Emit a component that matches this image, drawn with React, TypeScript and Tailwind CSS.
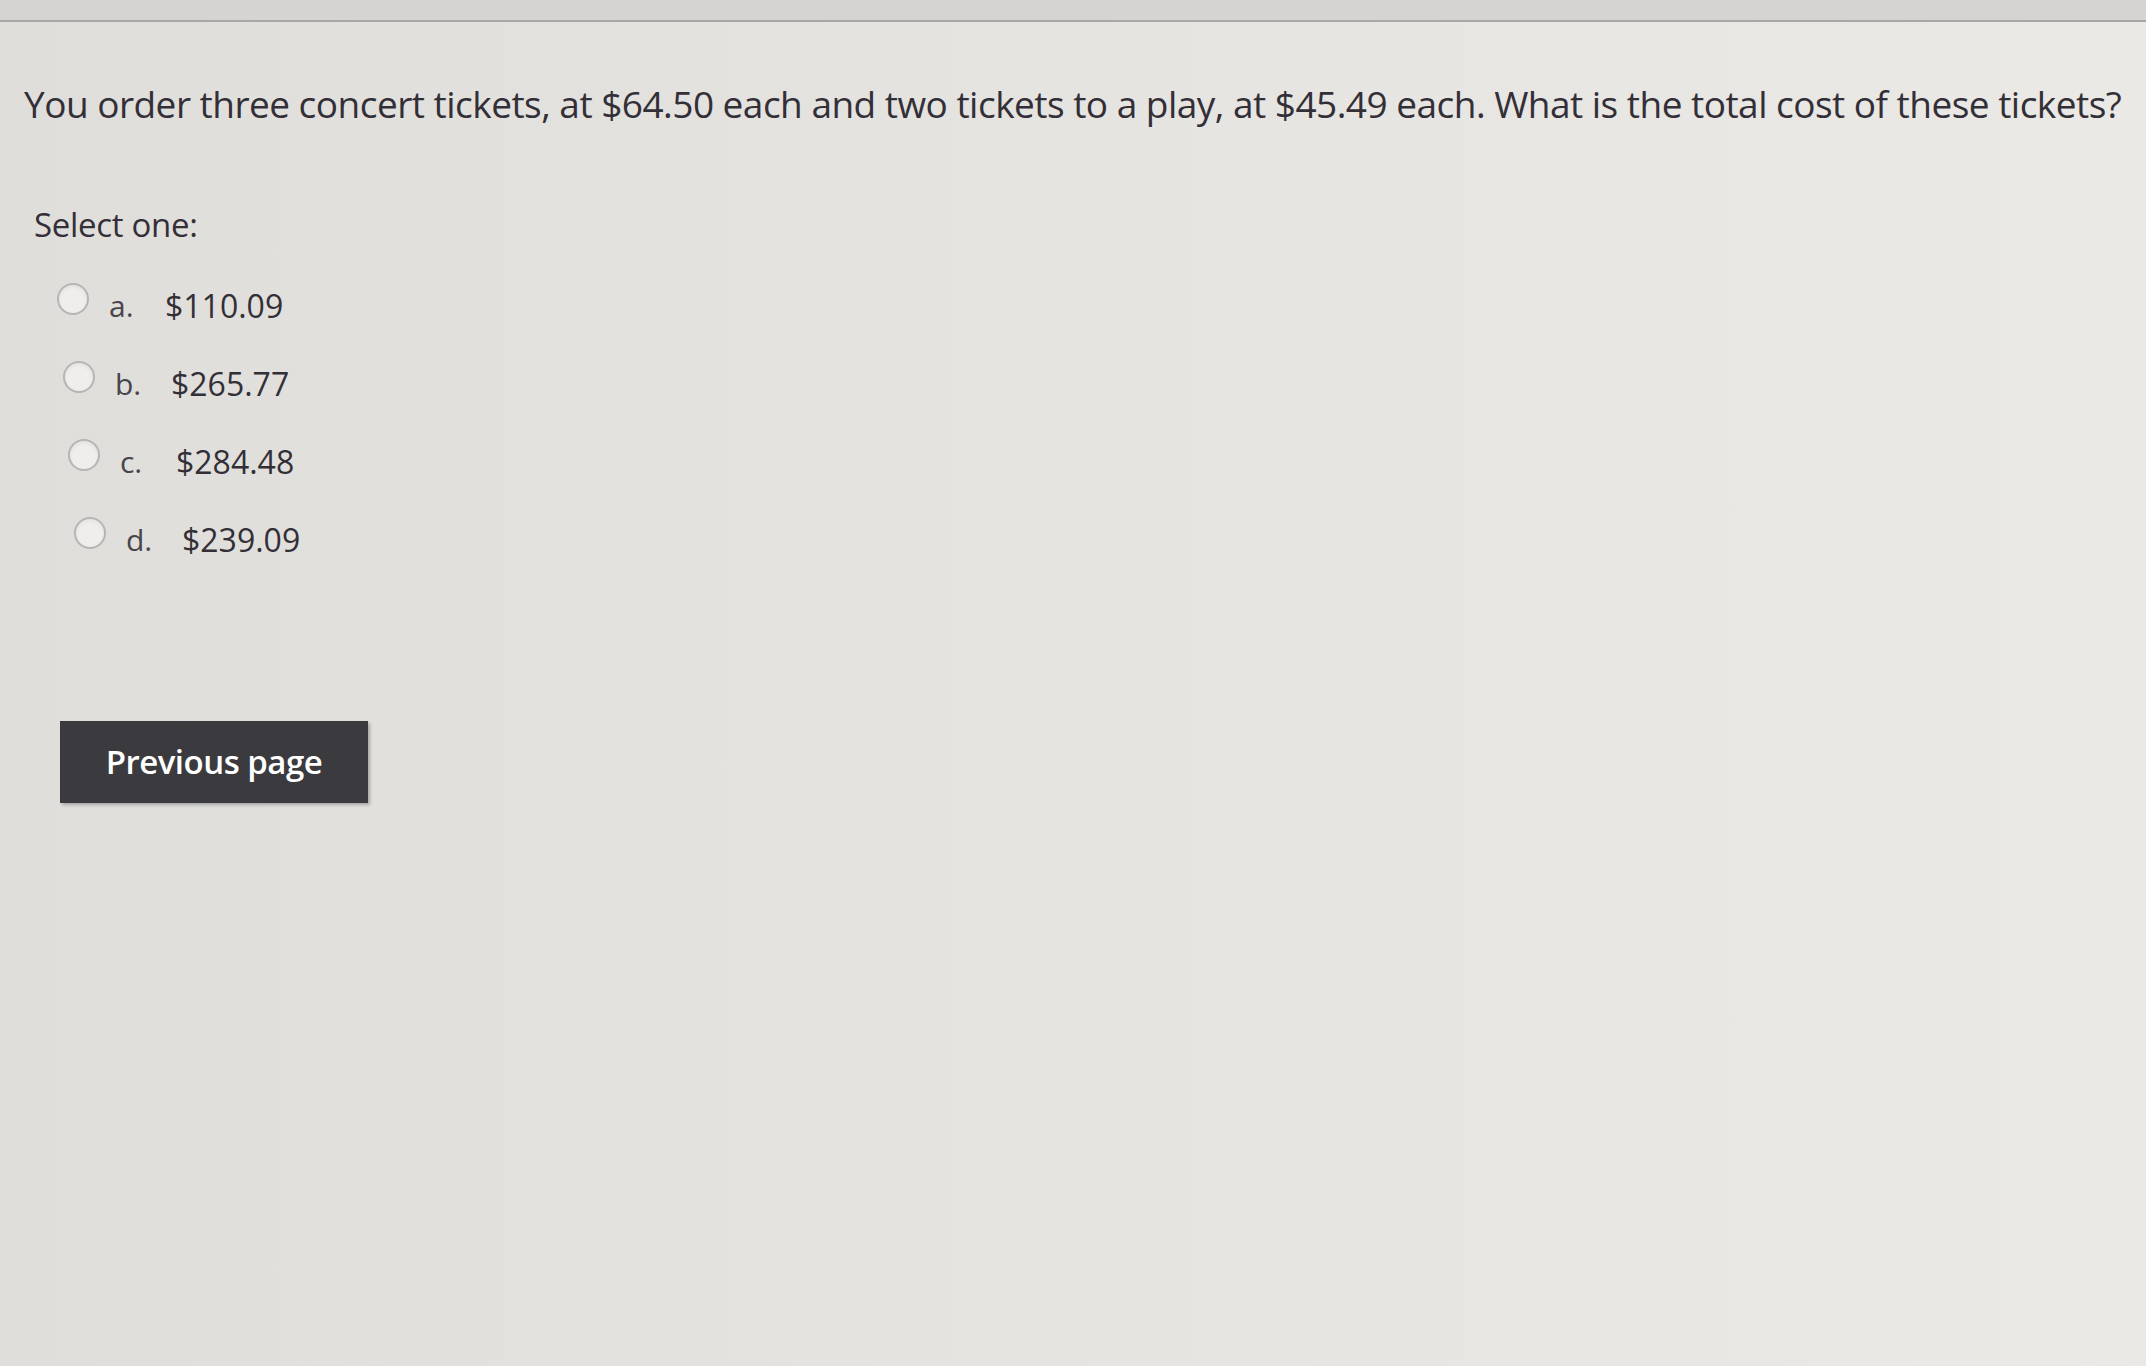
import React from 'react'

const options = [
  { letter: 'a.', value: '$110.09', indent: 'ml-[33px]' },
  { letter: 'b.', value: '$265.77', indent: 'ml-[39px]' },
  { letter: 'c.', value: '$284.48', indent: 'ml-[44px]' },
  { letter: 'd.', value: '$239.09', indent: 'ml-[50px]' },
]

export default function App() {
  return (
    <div
      className="min-h-[1366px] w-full bg-gradient-to-r from-[#e0dedb] via-[#e6e4e1] to-[#eae9e6] text-[#332f37]"
      style={{ fontFamily: '"Open Sans", "Noto Sans", sans-serif' }}
    >
      {/* top strip */}
      <div className="h-[22px] bg-[#d6d4d2] border-b-2 border-[#a9a7a6]" />

      <div className="pl-[24px] pt-[60px]">
        <p className="text-[37px] leading-[44px] tracking-[-0.52px] whitespace-nowrap">
          You order three concert tickets, at $64.50 each and two tickets to a play, at $45.49 each. What is the total cost of these tickets?
        </p>

        <p className="mt-[80px] ml-[10px] text-[33px] leading-[38px] tracking-[-0.3px]">Select one:</p>

        <div className="mt-[42px] flex flex-col gap-[38px]">
          {options.map((o) => (
            <label key={o.letter} className={`flex items-center h-[40px] ${o.indent}`}>
              <span className="w-[32px] h-[32px] rounded-full border-2 border-[#b7b5b4] bg-[#efeeec] shadow-inner mr-[20px] -mt-[14px]" />
              <span className="w-[56px] text-[30px] leading-[40px] text-[#48454b]">{o.letter}</span>
              <span className="text-[32px] leading-[40px]">{o.value}</span>
            </label>
          ))}
        </div>

        <button className="mt-[161px] ml-[36px] w-[308px] h-[82px] bg-[#3b3a3f] text-white text-[33px] font-semibold tracking-[-0.5px] shadow-[2px_2px_3px_rgba(0,0,0,0.25)]">
          Previous page
        </button>
      </div>
    </div>
  )
}
